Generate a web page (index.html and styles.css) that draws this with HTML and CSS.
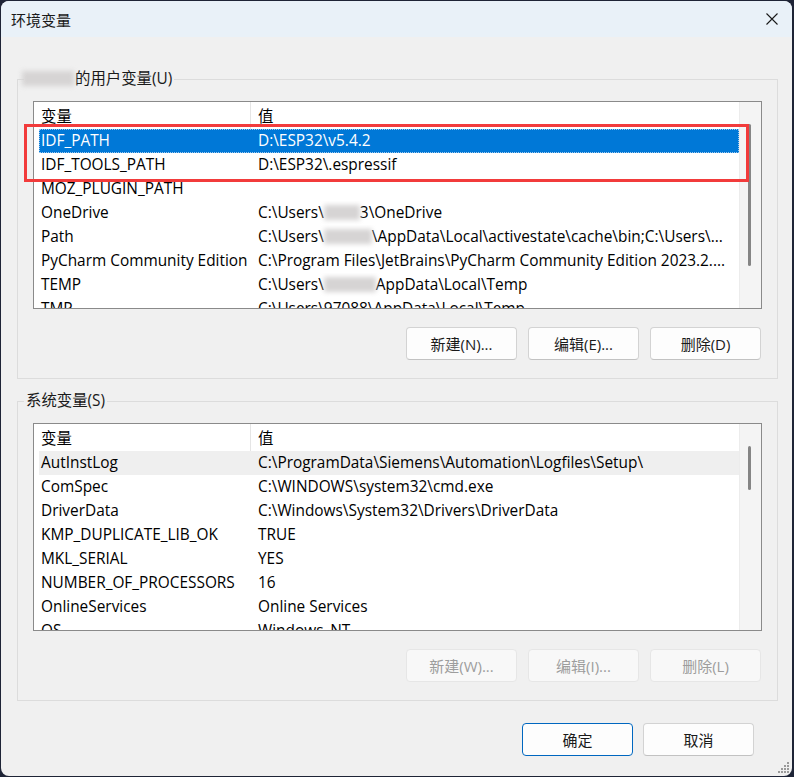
FILE: index.html
```html
<!DOCTYPE html>
<html lang="zh-CN">
<head>
  <meta charset="UTF-8" />
  <title>环境变量</title>
  <link rel="stylesheet" href="styles.css">
</head>
<body>

  <div class="window">
    <div class="titlebar">
      <span class="title">环境变量</span>
      <svg class="close" width="12" height="12" viewBox="0 0 12 12">
        <path d="M0.5 0.5 L11.5 11.5 M11.5 0.5 L0.5 11.5" stroke="#1a1a1a" stroke-width="1.1" fill="none"/>
      </svg>
    </div>

    <div class="content">
      <fieldset class="group user">
        <legend><span class="redact legend-redact"></span>的用户变量(U)</legend>
        <div class="list">
          <div class="list-main">
            <div class="list-head">
              <div class="c1">变量</div>
              <div class="c2">值</div>
            </div>
            <div class="list-rows">
              <div class="row selected"><div class="c1">IDF_PATH</div><div class="c2">D:\ESP32\v5.4.2</div></div>
              <div class="row"><div class="c1">IDF_TOOLS_PATH</div><div class="c2">D:\ESP32\.espressif</div></div>
              <div class="row"><div class="c1">MOZ_PLUGIN_PATH</div><div class="c2"></div></div>
              <div class="row"><div class="c1">OneDrive</div><div class="c2">C:\Users\<span class="redact r36"></span>3\OneDrive</div></div>
              <div class="row"><div class="c1">Path</div><div class="c2">C:\Users\<span class="redact r48"></span>\AppData\Local\activestate\cache\bin;C:\Users\...</div></div>
              <div class="row"><div class="c1">PyCharm Community Edition</div><div class="c2">C:\Program Files\JetBrains\PyCharm Community Edition 2023.2....</div></div>
              <div class="row"><div class="c1">TEMP</div><div class="c2">C:\Users\<span class="redact r52"></span>AppData\Local\Temp</div></div>
              <div class="row"><div class="c1">TMP</div><div class="c2">C:\Users\97088\AppData\Local\Temp</div></div>
            </div>
          </div>
          <div class="scrollbar"><div class="thumb long"></div></div>
          <div class="mark"></div>
        </div>
        <div class="actions">
          <button>新建(N)...</button>
          <button>编辑(E)...</button>
          <button>删除(D)</button>
        </div>
      </fieldset>

      <fieldset class="group system">
        <legend>系统变量(S)</legend>
        <div class="list">
          <div class="list-main">
            <div class="list-head">
              <div class="c1">变量</div>
              <div class="c2">值</div>
            </div>
            <div class="list-rows">
              <div class="row hover"><div class="c1">AutInstLog</div><div class="c2">C:\ProgramData\Siemens\Automation\Logfiles\Setup\</div></div>
              <div class="row"><div class="c1">ComSpec</div><div class="c2">C:\WINDOWS\system32\cmd.exe</div></div>
              <div class="row"><div class="c1">DriverData</div><div class="c2">C:\Windows\System32\Drivers\DriverData</div></div>
              <div class="row"><div class="c1">KMP_DUPLICATE_LIB_OK</div><div class="c2">TRUE</div></div>
              <div class="row"><div class="c1">MKL_SERIAL</div><div class="c2">YES</div></div>
              <div class="row"><div class="c1">NUMBER_OF_PROCESSORS</div><div class="c2">16</div></div>
              <div class="row"><div class="c1">OnlineServices</div><div class="c2">Online Services</div></div>
              <div class="row"><div class="c1">OS</div><div class="c2">Windows_NT</div></div>
            </div>
          </div>
          <div class="scrollbar"><div class="thumb short"></div></div>
        </div>
        <div class="actions">
          <button disabled>新建(W)...</button>
          <button disabled>编辑(I)...</button>
          <button disabled>删除(L)</button>
        </div>
      </fieldset>

      <div class="footer">
        <button class="default">确定</button>
        <button>取消</button>
      </div>
    </div>

    <svg class="grip" width="12" height="12" viewBox="0 0 12 12">
      <g fill="#9a9a9a">
        <rect x="9" y="0" width="2" height="2"/>
        <rect x="6" y="3" width="2" height="2"/><rect x="9" y="3" width="2" height="2"/>
        <rect x="3" y="6" width="2" height="2"/><rect x="6" y="6" width="2" height="2"/><rect x="9" y="6" width="2" height="2"/>
        <rect x="0" y="9" width="2" height="2"/><rect x="3" y="9" width="2" height="2"/><rect x="6" y="9" width="2" height="2"/><rect x="9" y="9" width="2" height="2"/>
      </g>
    </svg>
  </div>

</body>
</html>
```

FILE: styles.css
```css
* {
  box-sizing: border-box;
  margin: 0;
  padding: 0;
}
body {
  background: #1e2436;
  font-family: "Open Sans", "Noto Sans CJK SC", sans-serif;
  font-size: 15.4px;
  color: #000;
}
.window {
  position: relative;
  margin: 1px;
  width: 791px;
  height: 775px;
  background: #f0f0f0;
  border-radius: 8px;
  overflow: hidden;
}
.titlebar {
  height: 36px;
  background: #e9f1f8;
  display: flex;
  align-items: center;
  justify-content: space-between;
  padding: 0 14px 0 10px;
}
.title {
  font-family: "Noto Sans CJK SC", sans-serif;
  font-size: 15px;
  color: #1a1a1a;
}
.content {
  padding: 0 14px 0 16px;
}

/* group boxes */
.group {
  border: 1px solid #dcdcdc;
  padding: 12px 15px 18px;
}
.group.user {
  margin-top: 32px;
}
.group.system {
  margin-top: 12px;
}
.group legend {
  margin-left: -9px;
  padding: 0 2px;
  line-height: 20px;
  color: #1a1a1a;
}
.redact {
  display: inline-block;
  height: 15px;
  vertical-align: -2px;
  background: #d6d4d4;
  filter: blur(2.5px);
}
.legend-redact {
  width: 52px;
  margin-left: -4px;
  margin-right: 1px;
}
.r36 { width: 36px; }
.r48 { width: 48px; }
.r52 { width: 52px; }

/* list views */
.list {
  position: relative;
  height: 208px;
  border: 1px solid #8a8a8a;
  background: #fff;
  display: flex;
}
.list-main {
  flex: 1;
  overflow: hidden;
}
.list-head, .row {
  display: flex;
  margin-left: 5px;
  white-space: nowrap;
}
.list-head {
  height: 27px;
  line-height: 29px;
}
.list-head .c1 {
  border-right: 1px solid #e5e5e5;
}
.c1 {
  width: 212px;
  flex: none;
  padding-left: 2px;
  overflow: hidden;
}
.c2 {
  flex: 1;
  padding-left: 7px;
  overflow: hidden;
}
.list-rows {
  height: 179px;
  overflow: hidden;
}
.row {
  height: 24px;
  line-height: 24px;
}
.row.selected {
  background: #0078d7;
  color: #fff;
  outline: 1px dotted #9cc8ee;
  outline-offset: -1px;
}
.row.hover {
  background: #efefef;
}
.scrollbar {
  width: 22px;
  flex: none;
  background: #f4f4f4;
  border-left: 1px solid #ececec;
  padding: 22px 0 0 8px;
}
.thumb {
  width: 3px;
  background: #858585;
  border-radius: 2px;
}
.thumb.long { height: 142px; }
.thumb.short { height: 44px; }

/* annotation frame around the two IDF rows */
.mark {
  position: absolute;
  left: -10px;
  top: 22px;
  width: 725px;
  height: 58px;
  border: 3px solid #f23b3b;
}

/* buttons */
.actions, .footer {
  display: flex;
  justify-content: flex-end;
}
.actions {
  gap: 11px;
  margin-top: 18px;
  padding-right: 1px;
}
button {
  width: 111px;
  height: 33px;
  font-family: "Open Sans", "Noto Sans CJK SC", sans-serif;
  font-size: 15px;
  color: #1a1a1a;
  background: #fdfdfd;
  border: 1px solid #d3d3d3;
  border-bottom-color: #c2c2c2;
  border-radius: 4px;
}
button:disabled {
  color: #9d9d9d;
  background: #f8f8f8;
  border-color: #e6e6e6;
}
button.default {
  border: 1px solid #0067c0;
}
.footer {
  gap: 10px;
  margin-top: 22px;
  padding-right: 24px;
}
.grip {
  position: absolute;
  right: 2px;
  bottom: 2px;
}
```
